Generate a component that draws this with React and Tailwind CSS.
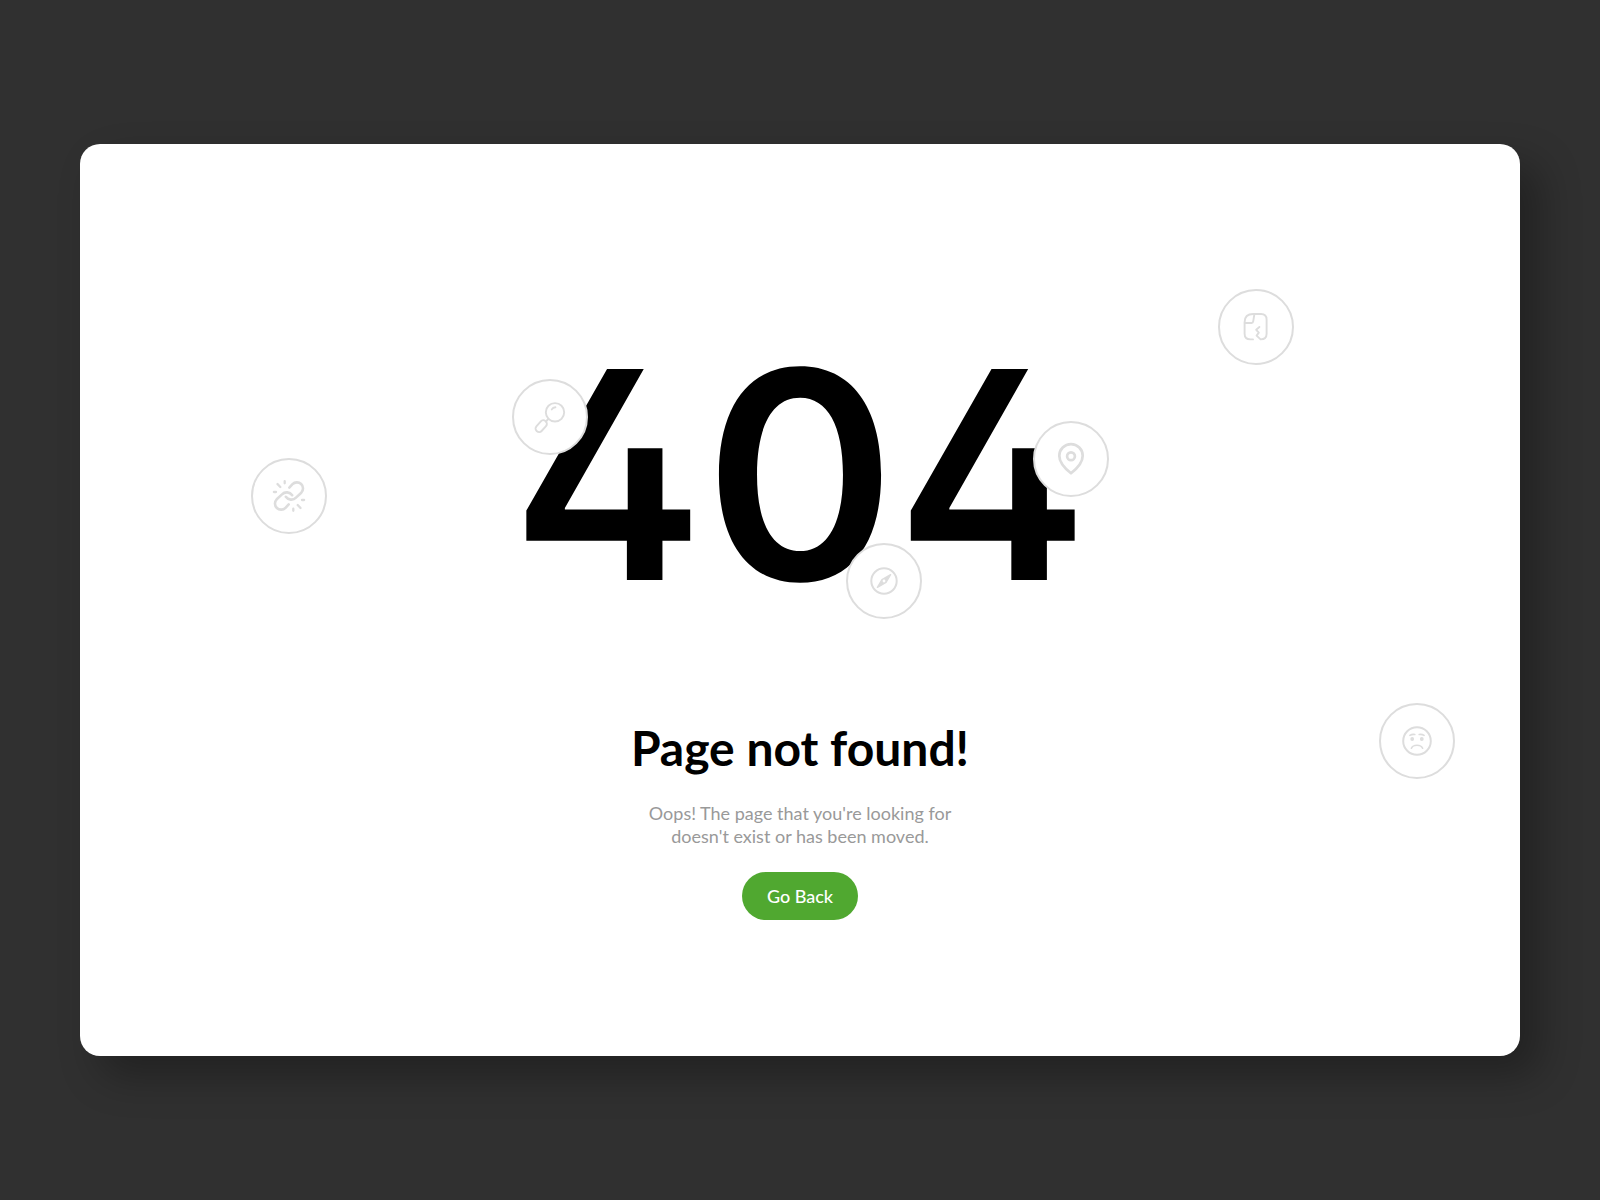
import React from 'react';

const BrokenLinkIcon = () => (
  <svg viewBox="0 0 40 40" className="size-10" fill="none" stroke="currentColor" strokeWidth="2.6" strokeLinecap="round" strokeLinejoin="round" aria-hidden="true">
    <path d="M20.3 11.6 23.5 8.2A5.9 5.9 0 0 1 32.3 16.7L27 21.6A6.6 6.6 0 0 1 16.8 20.8" />
    <path d="M19.7 28.4 16.5 31.8A5.9 5.9 0 0 1 7.7 23.3L13 18.4A6.6 6.6 0 0 1 23.2 19.2" />
    <path strokeWidth="2.3" d="M8.5 8 11.3 11M15.7 5.2V7.3M4.9 16H7M31.5 32 28.7 29M24.3 34.8V32.7M35.1 24H33" />
  </svg>
);

const SearchIcon = () => (
  <svg viewBox="0 0 40 40" className="size-10" fill="none" stroke="currentColor" strokeWidth="1.9" strokeLinecap="round" aria-hidden="true">
    <circle cx="25" cy="15.3" r="9.2" />
    <path d="M21.8 12.4C22.6 11 23.8 10.4 25.4 10.3M18.4 21.8 16.4 24" />
    <rect x="7.7" y="22.6" width="7" height="13.2" rx="3.3" transform="rotate(42 11.2 29.2)" />
  </svg>
);

const PinIcon = () => (
  <svg viewBox="0 0 40 40" className="size-10" fill="none" stroke="currentColor" strokeWidth="2.7" strokeLinejoin="round" aria-hidden="true">
    <path d="M20 34.3C14.5 30 8.3 24.5 8.3 16.8A11.7 11.7 0 0 1 31.7 16.8C31.7 24.5 25.5 30 20 34.3Z" />
    <circle cx="20" cy="17.3" r="3.9" />
  </svg>
);

const CompassIcon = () => (
  <svg viewBox="0 0 40 40" className="size-10" fill="none" stroke="currentColor" strokeWidth="2" strokeLinejoin="round" aria-hidden="true">
    <circle cx="20" cy="20" r="12.7" />
    <path fill="currentColor" strokeWidth="1.4" d="M26.6 13.6 18 18.7 13.4 26.4 22 21.3Z" />
    <circle cx="20" cy="20" r="1.4" className="fill-white" stroke="none" />
  </svg>
);

const TornFileIcon = () => (
  <svg viewBox="0 0 40 40" className="size-10" fill="none" stroke="currentColor" strokeWidth="1.9" strokeLinecap="round" strokeLinejoin="round" aria-hidden="true">
    <path d="M17 32.4H14.4Q8.6 32.4 8.6 26.8V15.2Q8.6 7 17.2 7H25Q30.6 7 30.6 12.6V26.8Q30.6 32.4 24.6 32.4L20.6 28.6 22.8 25.6 20.2 22.8 23.4 20" />
    <path d="M8.8 16H15.6Q17 16 17.2 14.4L18.4 7.2" />
  </svg>
);

const SadIcon = () => (
  <svg viewBox="0 0 40 40" className="size-10" fill="none" stroke="currentColor" strokeWidth="1.6" strokeLinecap="round" aria-hidden="true">
    <circle cx="20" cy="20" r="13.8" strokeWidth="2" />
    <path d="M12.9 14.4Q15 13 17.8 13.5M27.1 14.4Q25 13 22.2 13.5M14.4 27.2C16 23.2 24 23.2 25.6 27.2" />
    <circle cx="15.2" cy="18" r="1.9" fill="currentColor" stroke="none" />
    <circle cx="24.8" cy="18" r="1.9" fill="currentColor" stroke="none" />
  </svg>
);

const Badge = ({ className, children }) => (
  <div className={`absolute flex size-[76px] items-center justify-center rounded-full border-2 border-[#dddddd] bg-white text-[#dddddd] ${className}`}>
    {children}
  </div>
);

const App = () => {
  return (
    <div className="flex min-h-screen items-center justify-center bg-[#303030] font-['Lato',sans-serif]">
      <main className="relative flex min-h-[76vh] w-[90%] flex-col items-center justify-center rounded-[20px] bg-white text-center shadow-[20px_20px_40px_rgba(0,0,0,0.3)]">
        <Badge className="left-[171px] top-[314px]"><BrokenLinkIcon /></Badge>
        <Badge className="right-[226px] top-[145px]"><TornFileIcon /></Badge>
        <Badge className="bottom-[277px] right-[65px]"><SadIcon /></Badge>

        <div className="relative w-[600px]">
          {/* cv02 switches Inter to its open four */}
          <div className="font-['Inter',sans-serif] text-[290px] font-semibold leading-[390px] text-black [font-feature-settings:'cv02']">404</div>
          <Badge className="left-[12px] top-[99px]"><SearchIcon /></Badge>
          <Badge className="left-[533px] top-[141px]"><PinIcon /></Badge>
          <Badge className="left-[346px] top-[263px]"><CompassIcon /></Badge>
        </div>

        <h1 className="mt-12 text-5xl font-bold leading-[60px] text-black">Page not found!</h1>
        <p className="mt-6 w-80 text-lg leading-[23px] text-[#999999]">
          Oops! The page that you're looking for doesn't exist or has been moved.
        </p>
        <button type="button" className="mt-6 h-12 rounded-full bg-[#50a830] px-[25px] text-lg font-medium text-white hover:bg-[#469629]">
          Go Back
        </button>
      </main>
    </div>
  );
};

export default App;
